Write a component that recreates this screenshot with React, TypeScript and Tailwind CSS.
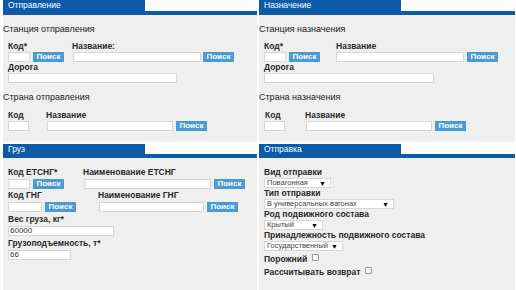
import React from "react";

const BLUE = "bg-[#0c5ba8]";

function Header({ title, tall }: { title: string; tall?: boolean }) {
  return (
    <div>
      <div
        className={`${BLUE} w-[142px] ${tall ? "h-[11px]" : "h-[10px]"} pl-[5px] flex items-center text-white text-[8.5px] leading-none`}
      >
        {title}
      </div>
      <div className={`${BLUE} h-[4px]`} />
    </div>
  );
}

function Label({ children, className = "" }: { children: React.ReactNode; className?: string }) {
  return <div className={`text-[8.5px] leading-[10px] font-bold text-[#2a2a2a] whitespace-nowrap ${className}`}>{children}</div>;
}

function Input({ w, value, className = "" }: { w: string; value?: string; className?: string }) {
  return (
    <div className={`h-[10px] ${w} border border-[#d6d6d6] bg-white text-[8px] leading-[8px] pl-[1px] text-[#333] ${className}`}>
      {value}
    </div>
  );
}

function Btn({ className = "" }: { className?: string }) {
  return (
    <div className={`h-[10px] w-[31px] bg-[#4b9ad8] text-white font-bold text-[8px] leading-[10px] text-center ${className}`}>
      Поиск
    </div>
  );
}

function Select({ w, text }: { w: string; text: string }) {
  return (
    <div className={`mt-[1px] h-[10px] ${w} border border-[#d6d6d6] bg-white flex items-center justify-between pl-[2px] pr-[4px]`}>
      <span className="text-[7.5px] leading-none text-[#444]">{text}</span>
      <span className="text-[7px] leading-none text-black">▼</span>
    </div>
  );
}

function Check({ label }: { label: string }) {
  return (
    <div className="h-[13px] flex items-center">
      <Label>{label}</Label>
      <div className="ml-[5px] w-[7px] h-[7px] rounded-[1px] border border-[#9a9a9a] bg-[#f6f6f6] -mt-[2px]" />
    </div>
  );
}

function Heading({ children, className = "" }: { children: React.ReactNode; className?: string }) {
  return <div className={`text-[9px] leading-[10px] text-[#222] whitespace-nowrap ${className}`}>{children}</div>;
}

export default function App() {
  return (
    <div className="w-[516px] h-[290px] bg-white font-['Liberation_Sans',Arial,sans-serif] pl-[3px] overflow-hidden">
      <div className="grid grid-cols-[254px_256px] gap-x-[2px]">
        {/* Top left */}
        <div>
          <Header title="Отправление" tall />
          <div className="bg-[#efefef] h-[127px] pt-[9px]">
            <Heading>Станция отправления</Heading>
            <div className="flex mt-[7px] pl-[5px]">
              <div className="w-[64px]">
                <Label>Код*</Label>
                <div className="flex mt-[1px]">
                  <Input w="w-[22px]" />
                  <Btn className="ml-[3px]" />
                </div>
              </div>
              <div>
                <Label>Название:</Label>
                <div className="flex mt-[1px] pl-[1px]">
                  <Input w="w-[128px]" />
                  <Btn className="ml-[2px]" />
                </div>
              </div>
            </div>
            <div className="pl-[5px]">
              <Label>Дорога</Label>
              <Input w="w-[169px]" className="mt-[1px]" />
            </div>
            <Heading className="mt-[9px]">Страна отправления</Heading>
            <div className="flex mt-[8px] pl-[5px]">
              <div className="w-[38px]">
                <Label>Код</Label>
                <Input w="w-[21px]" className="mt-[1px]" />
              </div>
              <div>
                <Label>Название</Label>
                <div className="flex mt-[1px] pl-[1px]">
                  <Input w="w-[126px]" />
                  <Btn className="ml-[3px]" />
                </div>
              </div>
            </div>
          </div>
        </div>

        {/* Top right */}
        <div>
          <Header title="Назначение" tall />
          <div className="bg-[#efefef] h-[127px] pt-[9px]">
            <Heading>Станция назначения</Heading>
            <div className="flex mt-[7px] pl-[5px]">
              <div className="w-[72px]">
                <Label>Код*</Label>
                <div className="flex mt-[1px]">
                  <Input w="w-[22px]" />
                  <Btn className="ml-[3px]" />
                </div>
              </div>
              <div>
                <Label>Название</Label>
                <div className="flex mt-[1px]">
                  <Input w="w-[128px]" />
                  <Btn className="ml-[3px]" />
                </div>
              </div>
            </div>
            <div className="pl-[5px]">
              <Label>Дорога</Label>
              <Input w="w-[170px]" className="mt-[1px]" />
            </div>
            <Heading className="mt-[9px]">Страна назначения</Heading>
            <div className="flex mt-[8px] pl-[5px]">
              <div className="w-[41px]">
                <Label className="pl-[1px]">Код</Label>
                <Input w="w-[21px]" className="mt-[1px]" />
              </div>
              <div>
                <Label>Название</Label>
                <div className="flex mt-[1px] pl-[1px]">
                  <Input w="w-[126px]" />
                  <Btn className="ml-[3px]" />
                </div>
              </div>
            </div>
          </div>
        </div>
      </div>

      <div className="grid grid-cols-[254px_256px] gap-x-[2px] mt-[2px]">
        {/* Bottom left */}
        <div>
          <Header title="Груз" />
          <div className="bg-[#efefef] h-[132px] pt-[9px] pl-[5px]">
            <div className="flex">
              <div className="w-[75px]">
                <Label>Код ЕТСНГ*</Label>
                <div className="flex mt-[2px]">
                  <Input w="w-[22px]" />
                  <Btn className="ml-[3px]" />
                </div>
              </div>
              <div>
                <Label>Наименование ЕТСНГ</Label>
                <div className="flex mt-[2px] pl-[1px]">
                  <Input w="w-[127px]" />
                  <Btn className="ml-[3px]" />
                </div>
              </div>
            </div>
            <div className="flex mt-[1px]">
              <div className="w-[90px]">
                <Label>Код ГНГ</Label>
                <div className="flex mt-[2px]">
                  <Input w="w-[34px]" />
                  <Btn className="ml-[3px]" />
                </div>
              </div>
              <div>
                <Label>Наименование ГНГ</Label>
                <div className="flex mt-[2px] pl-[1px]">
                  <Input w="w-[105px]" />
                  <Btn className="ml-[3px]" />
                </div>
              </div>
            </div>
            <Label className="mt-[2px]">Вес груза, кг*</Label>
            <Input w="w-[106px]" value="60000" className="mt-[2px]" />
            <Label className="mt-[2px]">Грузоподъемность, т*</Label>
            <Input w="w-[63px]" value="66" className="mt-[2px]" />
          </div>
        </div>

        {/* Bottom right */}
        <div>
          <Header title="Отправка" />
          <div className="bg-[#efefef] h-[132px] pt-[9px] pl-[5px]">
            <Label>Вид отправки</Label>
            <Select w="w-[67px]" text="Повагонная" />
            <Label>Тип отправки</Label>
            <Select w="w-[130px]" text="В универсальных вагонах" />
            <Label>Род подвижного состава</Label>
            <Select w="w-[59px]" text="Крытый" />
            <Label>Принадлежность подвижного состава</Label>
            <Select w="w-[79px]" text="Государственный" />
            <div className="mt-[1px]">
              <Check label="Порожний" />
              <Check label="Рассчитывать возврат" />
            </div>
          </div>
        </div>
      </div>
    </div>
  );
}
